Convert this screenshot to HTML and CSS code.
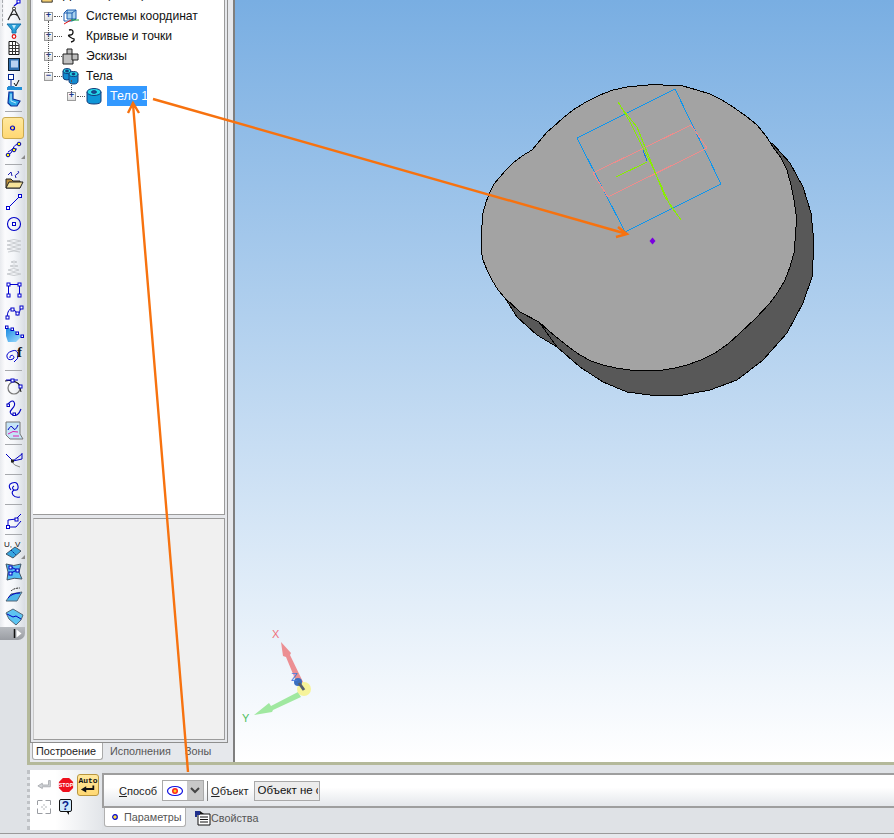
FILE: index.html
```html
<!DOCTYPE html>
<html lang="ru">
<head>
<meta charset="utf-8">
<title>КОМПАС-3D</title>
<link rel="stylesheet" href="styles.css">
</head>
<body>
<div class="workspace">
  <div class="side">
    <div class="toolbar">
      <span class="grip"></span>
      <div class="tool cut"><svg class="ico" viewBox="0 0 20 20"><path d="M10 22l5-4" stroke="#0000d8" fill="none" stroke-width="1.2"/><rect x="13" y="16" width="3" height="3" fill="#fff" stroke="#0000d8"/></svg></div>
      <div class="tool s"><svg class="ico" viewBox="0 0 20 20"><path d="M4 16L10 4.500L16 16M6.500 11.500Q10 9 13.500 11.500" fill="none" stroke="#222" stroke-width="1.200"/><circle cx="10" cy="4.500" r="1.500" fill="#fff" stroke="#222"/></svg></div>
      <div class="tool s"><svg class="ico" viewBox="0 0 20 20"><path d="M3 3h14l-5 6v3H8V9z" fill="#2a9fd8" stroke="#1670a8"/><path d="M8 4h4l-2 4z" fill="#bfe9fa"/><circle cx="10" cy="15.500" r="1.800" fill="#fff" stroke="#e01010" stroke-width="1.200"/></svg></div>
      <div class="tool s"><svg class="ico" viewBox="0 0 20 20"><path d="M5 3.500h7l3 3v10H5z" fill="#fff" stroke="#111"/><path d="M5 7.500h10M5 10.500h10M5 13.500h10M8.500 3.500v13M11.500 3.500v13" stroke="#333"/></svg></div>
      <div class="tool s"><svg class="ico" viewBox="0 0 20 20"><rect x="4.500" y="3.500" width="11" height="12" fill="#2f6fb0" stroke="#123"/><rect x="7" y="5.500" width="7" height="7" fill="#b9d2f2"/></svg></div>
      <div class="tool s"><svg class="ico" viewBox="0 0 20 20"><rect x="4.500" y="2.500" width="5" height="5" fill="#fff" stroke="#00238f"/><path d="M7 8v6" stroke="#00238f"/><path d="M3 15h15v3H3z" fill="#1f8ed6"/><path d="M4 14h6l1 1H4z" fill="#2f7fc8"/><path d="M10 11l2 3 3-6" stroke="#111" fill="none"/></svg></div>
      <div class="tool s"><svg class="ico" viewBox="0 0 20 20"><path d="M5 3h4v7l7 2-3 5H7l-3-3z" fill="#2ba6e6" stroke="#0c2f9a" stroke-width="1.200"/><path d="M7 5v7l5 2" stroke="#bfeaff" fill="none"/></svg></div>
      <div class="sep top"></div>
      <div class="tool sel"><svg class="ico" viewBox="0 0 20 20"><circle cx="9.500" cy="10" r="2" fill="#ffe04a" stroke="#0000d0" stroke-width="1.200"/></svg></div>
      <div class="tool"><svg class="ico" viewBox="0 0 20 20"><path d="M3 15Q8 14 9 9T16 4" stroke="#0a0ac0" fill="none"/><path d="M4 12Q8 8 13 9" stroke="#0a0ac0" fill="none"/><circle cx="4" cy="15" r="1.800" fill="#ff0" stroke="#00a"/><circle cx="10" cy="10" r="1.800" fill="#ff0" stroke="#00a"/><circle cx="15" cy="4" r="1.800" fill="#ff0" stroke="#00a"/><path d="M21 15v4h-4z" fill="#8a8a8a"/></svg></div>
      <div class="sep"></div>
      <div class="tool"><svg class="ico" viewBox="0 0 20 20"><path d="M2 9h5l2 2h7v7H2z" fill="#b98e3c" stroke="#222"/><path d="M2 18l3-6h14l-3 6z" fill="#f6e39a" stroke="#222"/><path d="M4 5l3-3 1 4M12 8q-2-3 1-4t1-3" stroke="#1a1ab0" fill="none"/></svg></div>
      <div class="tool"><svg class="ico" viewBox="0 0 20 20"><path d="M4 16L16 4" stroke="#0000d0"/><rect x="2.500" y="14.500" width="3" height="3" fill="#fff" stroke="#0000d0"/><rect x="14.500" y="2.500" width="3" height="3" fill="#fff" stroke="#0000d0"/></svg></div>
      <div class="tool"><svg class="ico" viewBox="0 0 20 20"><circle cx="10" cy="10" r="6.500" fill="none" stroke="#0000c8" stroke-width="1.100"/><rect x="8.500" y="8.500" width="3" height="3" fill="#fff" stroke="#0000c8"/></svg></div>
      <div class="tool"><svg class="ico off" viewBox="0 0 20 20"><path d="M3 5q7-3 14 0q-7 3-14 0M3 9q7-3 14 0q-7 3-14 0M3 13q7-3 14 0q-7 3-14 0M4 16q6-2 12 0" fill="none" stroke="#c9ccd0"/></svg></div>
      <div class="tool"><svg class="ico off" viewBox="0 0 20 20"><path d="M7 4q3-2 6 0q-3 2-6 0M6 8q4-2 8 0q-4 2-8 0M4 12q6-3 11 0q-5 3-11 0M3 16q7-3 14 0q-7 3-14 0" fill="none" stroke="#c9ccd0"/></svg></div>
      <div class="tool"><svg class="ico" viewBox="0 0 20 20"><path d="M4.500 16V4.500h11V16" fill="none" stroke="#0000d0"/><rect x="3" y="3" width="3" height="3" fill="#fff" stroke="#0000d0"/><rect x="14" y="3" width="3" height="3" fill="#fff" stroke="#0000d0"/><rect x="3" y="14" width="3" height="3" fill="#fff" stroke="#0000d0"/><rect x="14" y="14" width="3" height="3" fill="#fff" stroke="#0000d0"/></svg></div>
      <div class="tool"><svg class="ico" viewBox="0 0 20 20"><path d="M3 15Q4 6 8 7T13 12T17 5" fill="none" stroke="#0000c8"/><rect x="2" y="14" width="3" height="3" fill="#fff" stroke="#0000c8"/><rect x="7" y="6" width="3" height="3" fill="#fff" stroke="#0000c8"/><rect x="12" y="10" width="3" height="3" fill="#fff" stroke="#0000c8"/><rect x="16" y="4" width="3" height="3" fill="#fff" stroke="#0000c8"/></svg></div>
      <div class="tool"><svg class="ico" viewBox="0 0 20 20"><defs><linearGradient id="cy" x1="0" y1="0" x2="1" y2="1"><stop offset="0" stop-color="#1585e0"/><stop offset="1" stop-color="#a8e4ff"/></linearGradient></defs><path d="M2 3l8 3 8 6-6 6H4l-2-6z" fill="url(#cy)"/><g fill="#fff" stroke="#0000c8"><rect x="1.500" y="2" width="2.500" height="2.500"/><rect x="7" y="4" width="2.500" height="2.500"/><rect x="12" y="8" width="2.500" height="2.500"/><rect x="17" y="11" width="2.500" height="2.500"/></g></svg></div>
      <div class="tool"><svg class="ico" viewBox="0 0 20 20"><path d="M6 12a2 2 0 1 1 3 1q-5 2-6-2T8 5q5-2 6 3t-4 8" fill="none" stroke="#0000d0"/><text class="fn" x="13" y="11">f</text></svg></div>
      <div class="sep"></div>
      <div class="tool"><svg class="ico" viewBox="0 0 20 20"><circle cx="10" cy="12" r="6" fill="none" stroke="#777" stroke-width="1.200"/><path d="M1 5q8-2 14 3l2 8" fill="none" stroke="#111"/><path d="M2 4h12" stroke="#0000c8"/><rect x="7" y="3" width="3" height="3" fill="#fff" stroke="#0000c8"/><rect x="15" y="9" width="3" height="3" fill="#fff" stroke="#0000c8"/></svg></div>
      <div class="tool"><svg class="ico" viewBox="0 0 20 20"><path d="M3 7Q8 1 10 4T8 11T9 17T17 11" fill="none" stroke="#0000c0" stroke-width="1.100"/><rect x="3" y="6" width="2.500" height="2.500" fill="#fff" stroke="#0000c0"/><rect x="9" y="15" width="2.500" height="2.500" fill="#fff" stroke="#0000c0"/></svg></div>
      <div class="tool"><svg class="ico" viewBox="0 0 20 20"><path d="M2 2h14v12l3 5H6l-4-4z" fill="#c5e4f7" stroke="#777"/><path d="M4 10q3-6 5-2t5-3" stroke="#0000c0" fill="none"/><path d="M4 14q5-4 10-2M9 16h6" stroke="#e020b0" fill="none"/></svg></div>
      <div class="sep"></div>
      <div class="tool"><svg class="ico" viewBox="0 0 20 20"><path d="M2 4l7 7 9-7" fill="none" stroke="#0000c0"/><path d="M9 11l9-2V3" fill="none" stroke="#0000c0"/><path d="M7 11q3 5 9 6" fill="none" stroke="#888"/><rect x="7" y="9.500" width="3" height="3" fill="#222"/></svg></div>
      <div class="sep"></div>
      <div class="tool"><svg class="ico" viewBox="0 0 20 20"><path d="M7 10Q3 5 8 3T14 6T10 10Q7 12 9 15T16 17M10 6Q7 8 10 10" fill="none" stroke="#0000c8" stroke-width="1.100"/></svg></div>
      <div class="sep"></div>
      <div class="tool"><svg class="ico" viewBox="0 0 20 20"><path d="M4 17V10l8-1 5-5M4 17h8l5-6" fill="none" stroke="#0000c8"/><rect x="2.500" y="15.500" width="3" height="3" fill="#fff" stroke="#0000c8"/><rect x="11" y="8" width="3" height="3" fill="#fff" stroke="#0000c8"/></svg></div>
      <div class="sep"></div>
      <div class="tool"><svg class="ico" viewBox="0 0 20 20"><text class="uv" x="0" y="7">U,</text><text class="uv" x="11" y="7">V</text><path d="M2 14l9-7 6 4-8 7z" fill="#37a6e0" stroke="#456"/><path d="M7 10l5 5" stroke="#002a8c" stroke-dasharray="2 1"/><path d="M21 15v4h-4z" fill="#8a8a8a"/></svg></div>
      <div class="tool"><svg class="ico" viewBox="0 0 20 20"><path d="M2 2q8 3 15 0l-2 8 3 7q-8-2-15 1l1-8z" fill="#55bdf0" stroke="#456"/><path d="M7 5l6 3M7 11l6-3" stroke="#0000c0"/><g fill="#cdefff" stroke="#0000c0"><rect x="5" y="4" width="3" height="3"/><rect x="12" y="7" width="3" height="3"/><rect x="5" y="10" width="3" height="3"/></g></svg></div>
      <div class="tool"><svg class="ico" viewBox="0 0 20 20"><path d="M2 17l5-7 11-2-5 9z" fill="#4cb4ea" stroke="#567"/><path d="M4 14q4-5 12-5" stroke="#0000c0" fill="none"/><path d="M7 7q3-3 9-3" stroke="#111" stroke-dasharray="2 1" fill="none"/></svg></div>
      <div class="tool"><svg class="ico" viewBox="0 0 20 20"><path d="M2 7l7-4 10 6-2 5-5 5-7-6z" fill="#5cc4f2" stroke="#567"/><path d="M3 8l6 3 3-1 5 3" stroke="#0000c0" fill="none"/></svg></div>
      <div class="tool-end"><svg class="end-mark" width="9" height="9" viewBox="0 0 9 9"><path d="M1.500 0v9" stroke="#111" stroke-width="1.500"/><path d="M3.500 0.500L8.500 4.500L3.500 8.500z" fill="#fff"/></svg></div>
    </div>
  </div>
  <div class="frame-area">
    <div class="panel">
      <div class="panel-frame">
        <div class="tree">
          <span class="vline one"></span>
          <span class="vline two"></span>
          <div class="row root">
            <svg class="ticon" viewBox="0 0 16 16"><path d="M2 3h10l2 2v10H2z" fill="#f2cd72" stroke="#222"/></svg>
            <span class="label root-label">Деталь (Тел-1)</span>
          </div>
          <div class="row">
            <span class="exp">+</span><span class="dots"></span>
            <svg class="ticon" viewBox="0 0 18 18"><path d="M5 3h9v9H5z" fill="#a9d3ee" stroke="#1d5fb0"/><path d="M2 6l3-3M2 6v8h8l4-2M2 6h8v8M10 6l4-3" fill="none" stroke="#1d5fb0"/><path d="M9 13L2 17" stroke="#e01010"/><path d="M9 13h8" stroke="#11a030"/></svg>
            <span class="label">Системы координат</span>
          </div>
          <div class="row">
            <span class="exp">+</span><span class="dots"></span>
            <svg class="ticon" viewBox="0 0 18 18"><path d="M7 3q4-1 4 2t-3 3 0 2 4 2q1 2-3 3" fill="none" stroke="#111" stroke-width="1.300"/></svg>
            <span class="label">Кривые и точки</span>
          </div>
          <div class="row">
            <span class="exp">+</span><span class="dots"></span>
            <svg class="ticon" viewBox="0 0 18 18"><path d="M1 7h4V2h5v5h6v6h-5v4H1z" fill="#bfbfbf" stroke="#222"/><path d="M5 7h5v6h1" fill="none" stroke="#222"/></svg>
            <span class="label">Эскизы</span>
          </div>
          <div class="row">
            <span class="exp">−</span><span class="dots"></span>
            <svg class="ticon" viewBox="0 0 18 18"><g stroke="#123b7a"><path d="M1 4v6q0 3 4 3t4-3V4z" fill="#138bd0"/><ellipse cx="5" cy="4" rx="4" ry="2.500" fill="#25d4ea"/><ellipse cx="5" cy="4" rx="1.500" ry="1" fill="#123b7a"/><path d="M7 7v7q0 3 4.500 3t4.500-3V7z" fill="#138bd0"/><ellipse cx="11.500" cy="7" rx="4.500" ry="2.500" fill="#25d4ea"/><ellipse cx="11.500" cy="7" rx="1.500" ry="1" fill="#123b7a"/></g></svg>
            <span class="label">Тела</span>
          </div>
          <div class="row nested">
            <span class="exp">+</span><span class="dots"></span>
            <svg class="ticon" viewBox="0 0 18 18"><g stroke="#123b7a"><path d="M2 5v9q0 3 7 3t7-3V5z" fill="#0f96d8"/><ellipse cx="9" cy="5" rx="7" ry="3.500" fill="#25d8ea"/><ellipse cx="9" cy="5" rx="2.500" ry="1.300" fill="#1a4f9a"/></g></svg>
            <span class="label picked">Тело 1</span>
          </div>
        </div>
        <div class="lower-pane"></div>
      </div>
      <div class="panel-tabs">
        <span class="ptab on">Построение</span>
        <span class="ptab">Исполнения</span>
        <span class="ptab">Зоны</span>
      </div>
    </div>
    <div class="viewport">
      <svg class="model" viewBox="235 0 659 762" width="659" height="762">
        <g class="faces" stroke="#000" stroke-width="1" stroke-linejoin="round">
          <polygon fill="#585858" points="505,298 517,317 537,335 557,347 580,367 603,382 627,392 650,395 683,395 710,390 737,380 763,360 787,333 803,303 812,277 814,243 811,213 803,187 790,163 772,143 700,250 560,330"/>
          <polygon fill="#a3a3a3" points="653,84.500 683,86 697,90 710,94 722,100 733,107 746,116 757,125 766,136 773,147 781,158 787,170 791,185 794,200 796,214 796,227 795,241 794,253 790,267 785,280 778,292 770,303 756,318 740,333 728,344 715,353 701,360 687,365 675,368 663,370 630,370 616,368 603,365 591,361 580,355 570,348 560,340 549,331 539,322 520,312 505,298 498,290 492,280 487,270 483,260 481,249 481,238 482,225 483,213 486,202 490,192 494,184 500,177 506,170 513,163 522,156 532,150 537,144 542,138 547,132 553,127 563,118 573,110 586,102 600,95 613,90 627,87"/>
          <path d="M539 322L557 347" fill="none"/>
        </g>
        <g class="faces" fill="none" stroke-width="1">
          <polygon stroke="#0d96ee" points="675,89 721,184 625,232 577,138"/>
          <path stroke="#ee8c8c" d="M593 173L691 125L707 148L608 197Z"/>
          <path stroke="#88ee00" d="M618 102L623 110L637 127L665 197L681 220L670 205L653 168L630 122ZM616 177L647 162"/>
          <path stroke="#1a7ae0" d="M643 150L647 161"/>
        </g>
        <path d="M649.500 241l3-3.500 3 3.500-3 3.500z" fill="#7a00e0"/>
        <g>
          <path d="M281 642L291 653L290 655L304 684L298 686L286 657L283 656Z" fill="#ec8f93"/>
          <path d="M254 715L269 703L271 706L298 692L301 697L273 710L272 712Z" fill="#a0e8a0"/>
          <circle cx="304" cy="689" r="7" fill="#f6f39a"/>
          <circle cx="298" cy="682" r="4" fill="#3a6fc0"/>
          <path d="M299 683L304 690" stroke="#56606e" stroke-width="3"/>
          <text class="axis ax-x" x="272" y="638">X</text>
          <text class="axis ax-y" x="242" y="722">Y</text>
          <text class="axis ax-z" x="291" y="681">Z</text>
        </g>
      </svg>
    </div>
  </div>
</div>
<div class="bottom">
  <div class="cmd-box">
    <div class="cmd-row">
      <svg class="cmd-ico first" viewBox="0 0 18 18"><path d="M1 10l5-3v2h7V4h2v7H6v2z" fill="#cfd2d6" stroke="#a9acb0"/></svg>
      <svg class="cmd-ico" viewBox="0 0 18 18"><path d="M5.500 1h7L17 5.500v7L12.500 17h-7L1 12.500v-7z" fill="#ee0f1c"/><text class="stop" x="9" y="11.500">STOP</text></svg>
      <span class="auto"><span class="auto-t">Auto</span><svg class="auto-ico" viewBox="0 0 18 8"><path d="M16 0v5H7V8L1 4.500 7 1v2h7V0z" fill="#111"/></svg></span>
    </div>
    <div class="cmd-row second">
      <svg class="cmd-ico wide" viewBox="0 0 14 14"><path d="M1 .500h4.500M8.500 .500H13.500V5M13.500 8.500V13.500H8.500M5.500 13.500H.500V8.500M.500 5V.500" fill="none" stroke="#9a9da2"/><path d="M7 4v2M7 8v2M4 7h2M8 7h2" stroke="#b5b8bc"/></svg>
      <span class="help"><span class="q">?</span></span>
    </div>
  </div>
  <div class="cmd-right">
    <div class="param-bar">
      <span class="cap"><u>С</u>пособ</span>
      <span class="combo">
        <span class="combo-val"><svg width="18" height="12" viewBox="0 0 18 12"><ellipse cx="9" cy="6" rx="7.500" ry="4.500" fill="#fff" stroke="#1010e0" stroke-width="1.200"/><circle cx="9" cy="6" r="3" fill="#ff2020"/><circle cx="9" cy="6" r="1.500" fill="#ffd020"/></svg></span>
        <span class="combo-btn"><svg width="10" height="8" viewBox="0 0 10 8"><path d="M1 1l4 4 4-4" fill="none" stroke="#444" stroke-width="2"/></svg></span>
      </span>
      <span class="divider"></span>
      <span class="cap"><u>О</u>бъект</span>
      <span class="field"><span class="field-t">Объект не с</span></span>
    </div>
    <div class="cmd-tabs">
      <span class="ctab on"><svg class="dot" width="8" height="8" viewBox="0 0 8 8"><circle cx="4" cy="4" r="2.300" fill="#ffe040" stroke="#0000d0" stroke-width="1.200"/></svg>Параметры</span>
      <span class="ctab"><svg class="props" width="18" height="16" viewBox="0 0 18 16"><path d="M5 4h12v11H5z" fill="#fff" stroke="#111"/><path d="M7 7h8M7 9.500h8M7 12h8" stroke="#111"/><path d="M2 1h5v4H4v2H2z" fill="#20308c"/><path d="M7 1l4 3H7z" fill="#111"/></svg>Свойства</span>
    </div>
  </div>
</div>
<div class="status"></div>
<svg class="arrows" viewBox="0 0 894 838" width="894" height="838">
  <g fill="none" stroke="#f7720f" stroke-width="2.400">
    <path d="M153 99L627 234M618 227L627 234L616 237"/>
    <path d="M188 772L133 104M128 113L133 103L139 113"/>
  </g>
</svg>
</body>
</html>
```
FILE: styles.css
```css
* { box-sizing: border-box; }
html, body { margin: 0; padding: 0; }
body {
  position: relative;
  width: 894px;
  height: 838px;
  overflow: hidden;
  background: #dfe2e6;
  font-family: "Liberation Sans", Arial, sans-serif;
  font-size: 12px;
  color: #111;
}
.workspace { display: flex; height: 765px; }
.side { width: 27px; flex: none; }
.toolbar {
  position: relative;
  width: 25px;
  background: linear-gradient(90deg, #e8eaee 0, #fbfbfd 20%, #f4f6f9 55%, #d9dde3 100%);
  border-bottom-right-radius: 6px;
  display: flex;
  flex-direction: column;
  align-items: stretch;
}
.grip {
  position: absolute;
  left: 2px;
  top: 0;
  height: 26px;
  border-left: 1px dashed #a8abb0;
}
.tool { height: 22px; display: flex; align-items: center; justify-content: center; flex: none; padding-left: 2px; }
.tool.s { height: 17px; }
.tool.cut { height: 5.500px; align-items: flex-start; overflow: hidden; }
.tool.cut .ico { margin-top: -16px; }
.ico { width: 20px; height: 20px; flex: none; overflow: visible; display: block; }
.sep { height: 8px; flex: none; position: relative; }
.sep::after { content: ""; position: absolute; left: 5px; right: 3px; top: 3px; height: 1px; background: #a7a9ad; }
.sep.top { height: 9px; }
.tool.sel {
  height: 22px;
  margin: 0 1px 0 2px;
  padding-left: 0;
  background: linear-gradient(#ffe89e, #ffd873);
  border: 1px solid #c9a94f;
  border-radius: 3px;
}
.fn { font-family: "Liberation Serif", serif; font-size: 15px; font-weight: 700; fill: #111; }
.uv { font-family: "Liberation Sans", sans-serif; font-size: 8px; fill: #111; }
.tool-end {
  height: 13px;
  background: linear-gradient(#b9bcc1, #9a9da3);
  border-bottom-right-radius: 7px;
  display: flex;
  align-items: center;
  justify-content: flex-end;
  padding-right: 3px;
}
.end-mark { display: block; }
.frame-area {
  flex: 1;
  display: flex;
  border-left: 3px solid #b4b99a;
  border-bottom: 3px solid #b4b99a;
}
.panel {
  width: 203px;
  flex: none;
  display: flex;
  flex-direction: column;
  background: #e6e8ec;
  padding-right: 5px;
}
.panel-frame {
  height: 743px;
  flex: none;
  border: 1px solid #8e8e8e;
  border-top: 0;
  padding: 0 2px 2px;
  display: flex;
  flex-direction: column;
  overflow: hidden;
}
.tree {
  position: relative;
  height: 515px;
  flex: none;
  background: #fff;
  border-right: 1px solid #9b9b9b;
  border-bottom: 1px solid #9b9b9b;
  overflow: hidden;
}
.vline { position: absolute; width: 0; border-left: 1px dotted #555; }
.vline.one { left: 15px; top: 21px; height: 52px; }
.vline.two { left: 38px; top: 80px; height: 12px; }
.row {
  display: flex;
  align-items: center;
  height: 20px;
  padding-left: 11px;
  white-space: nowrap;
}
.row.root { margin-top: -14px; padding-left: 7px; }
.row.nested { padding-left: 34px; }
.exp {
  width: 9px;
  height: 9px;
  flex: none;
  border: 1px solid #9b9b9b;
  background: linear-gradient(#fff, #dcdcdc);
  color: #18388c;
  font: 700 9px/6px "Liberation Mono", monospace;
  text-align: center;
}
.dots { width: 8px; flex: none; border-top: 1px dotted #555; margin-left: 1px; }
.ticon { width: 18px; height: 18px; flex: none; }
.root .ticon { width: 14px; height: 14px; }
.label { margin-left: 6px; font-size: 12.100px; color: #111; }
.root-label { margin-left: 9px; margin-top: -5px; }
.picked { margin-left: 4px; background: #3399ff; color: #fff; height: 20px; line-height: 20px; padding: 0 0 0 3px; width: 40px; font-size: 12.500px; }
.lower-pane {
  margin-top: 3px;
  flex: 1;
  background: #f0f0f0;
  border: 1px solid #9b9b9b;
  border-left-color: #c8c8c8;
}
.panel-tabs { display: flex; padding-left: 2px; height: 18px; flex: none; }
.ptab { padding: 0 7px; line-height: 17px; font-size: 10.800px; color: #555; height: 17px; }
.ptab.on { background: #fff; color: #222; border: 1px solid #a9a9a9; border-top: 0; border-radius: 0 0 3px 3px; line-height: 16px; padding: 0 3px; width: 71px; }
.viewport {
  flex: 1;
  position: relative;
  border-left: 2px solid #7f7f7f;
  background: linear-gradient(#79aee2, #ffffff);
}
.model { position: absolute; left: 0; top: 0; display: block; overflow: hidden; }
.faces { shape-rendering: crispEdges; }
.axis { font-family: "Liberation Sans", sans-serif; font-size: 11px; }
.ax-x { fill: #f0707a; }
.ax-y { fill: #50c060; }
.ax-z { fill: #4a7de0; }
.bottom { display: flex; height: 68px; padding-left: 27px; }
.cmd-box {
  width: 75px;
  height: 60px;
  margin-top: 5px;
  flex: none;
  padding: 4px 0 0 7px;
  border-left: 3px dotted #bfc2c6;
  background: linear-gradient(90deg, #fff 35%, #e2e5e9 100%);
}
.cmd-row { display: flex; align-items: flex-start; gap: 3px; height: 24px; }
.cmd-row.second { padding-top: 1px; gap: 8px; }
.cmd-ico { width: 16px; height: 16px; margin-top: 3px; flex: none; }
.cmd-ico.first { margin-right: 2px; }
.cmd-ico.wide { width: 14px; height: 14px; margin-top: 1px; }
.stop { font-family: "Liberation Sans", sans-serif; font-size: 6px; font-weight: 700; fill: #fff; text-anchor: middle; }
.auto {
  width: 22px;
  height: 22px;
  flex: none;
  background: linear-gradient(#ffe89e, #ffd873);
  border: 1px solid #b9963f;
  border-radius: 3px;
  text-align: center;
  padding-top: 1px;
}
.auto-t { display: block; font: 700 8px/9px "Liberation Mono", monospace; }
.auto-ico { display: block; width: 16px; height: 8px; margin: 0 auto; }
.help {
  position: relative;
  width: 13px;
  height: 13px;
  flex: none;
  background: #cfe8fb;
  border: 1px solid #111;
  border-radius: 2px;
  text-align: center;
}
.help::after { content: ""; position: absolute; left: 6px; top: 11px; border-top: 4px solid #111; border-left: 3px solid transparent; }
.q { display: block; font: 700 12px/12px "Liberation Sans", sans-serif; color: #0c1f8c; }
.cmd-right { flex: 1; min-width: 0; padding-top: 8px; }
.param-bar {
  display: flex;
  align-items: center;
  height: 35px;
  padding-left: 15px;
  border: 2px solid #9e9e9e;
  border-right: 0;
  background: linear-gradient(#fff 40%, #e4e7eb);
}
.cap { font-size: 11px; color: #222; }
.combo {
  display: flex;
  width: 42px;
  height: 21px;
  margin-left: 5px;
  flex: none;
  border: 1px solid #a9a9a9;
  background: #fff;
}
.combo-val { flex: 1; display: flex; align-items: center; justify-content: center; }
.combo-btn { width: 16px; background: #c8c8c8; display: flex; align-items: center; justify-content: center; }
.divider { width: 1px; height: 20px; flex: none; background: #808080; margin: 0 3px; }
.field {
  width: 66px;
  height: 20px;
  margin-left: 5px;
  flex: none;
  padding-left: 3px;
  border: 1px solid #a9a9a9;
  background: #ececec;
  overflow: hidden;
  white-space: nowrap;
  line-height: 17px;
  font-size: 11.500px;
}
.field-t { display: block; width: 60px; overflow: hidden; }
.cmd-tabs { display: flex; align-items: flex-start; padding-left: 2px; }
.ctab { display: flex; align-items: center; height: 19px; color: #555; font-size: 10.800px; padding-left: 7px; white-space: nowrap; }
.ctab.on {
  width: 82px;
  padding-left: 6px;
  background: #fff;
  border: 1px solid #b0b0b0;
  border-top: 0;
  border-radius: 0 0 3px 3px;
}
.dot { margin-right: 5px; flex: none; }
.props { margin-right: 0; flex: none; }
.status { height: 5px; border-top: 1px solid #9a9a9a; background: #e6e8ec; }
.arrows { position: absolute; left: 0; top: 0; pointer-events: none; }
```
